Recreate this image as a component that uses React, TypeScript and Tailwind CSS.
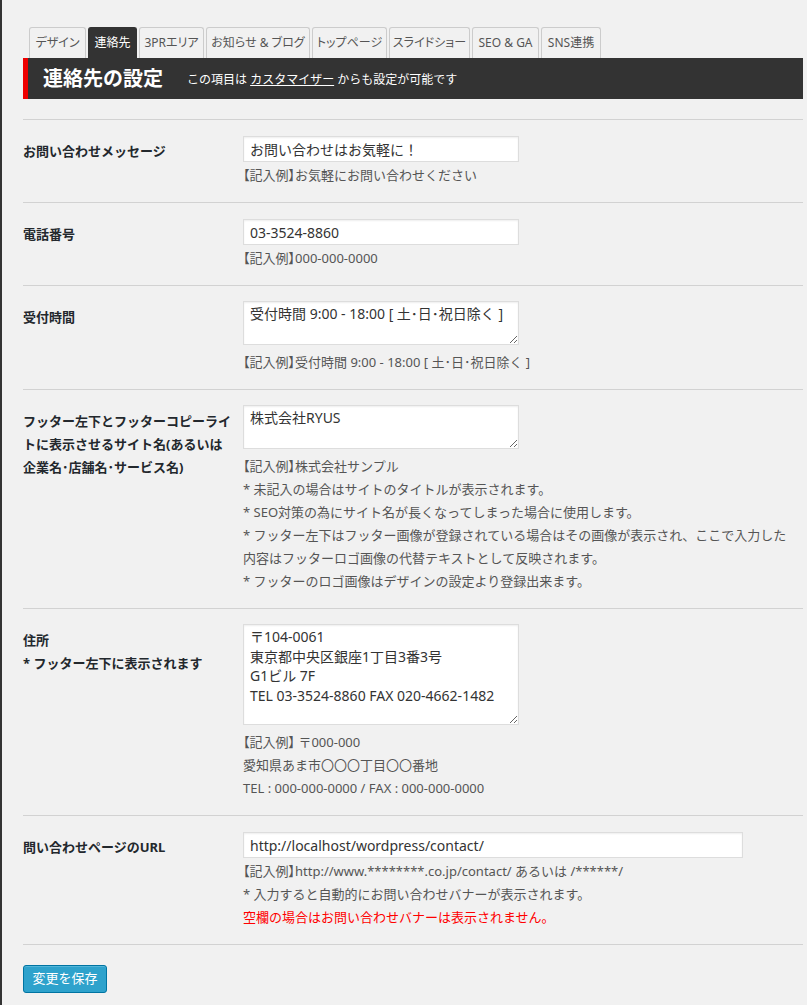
import React from 'react';

const tabs = [
  { label: 'デザイン', width: 'w-[57px]', active: false },
  { label: '連絡先', width: 'w-[49px]', active: true },
  { label: '3PRエリア', width: 'w-[65px]', active: false },
  { label: 'お知らせ & ブログ', width: 'w-[104px]', active: false },
  { label: 'トップページ', width: 'w-[75px]', active: false },
  { label: 'スライドショー', width: 'w-[81px]', active: false },
  { label: 'SEO & GA', width: 'w-[67px]', active: false },
  { label: 'SNS連携', width: 'w-[60px]', active: false },
];

const Row = ({ label, children }: { label: React.ReactNode; children: React.ReactNode }) => (
  <div className="flex border-t border-[#d2d2d2]">
    <div className="w-[220px] shrink-0 pt-[20px] pr-[10px] text-[13px] font-bold leading-[23px] text-[#23282d]">
      {label}
    </div>
    <div className="flex-1 py-[15px] pr-[10px]">{children}</div>
  </div>
);

const Help = ({ children, className = '' }: { children: React.ReactNode; className?: string }) => (
  <div className={`text-[13px] leading-[23px] text-[#555] ${className}`}>{children}</div>
);

// 【記入例】 — brackets are set narrow in the original
const Ex = () => <span className="[font-feature-settings:'palt']">【記入例】</span>;

const inputClass =
  'block mt-[1px] h-[26px] border border-[#ddd] bg-white px-[6px] text-[14px] text-[#333] shadow-[inset_0_1px_2px_rgba(0,0,0,0.07)] outline-none';
const textareaClass =
  'block w-[276px] border border-[#ddd] bg-white px-[6px] py-[2px] text-[14px] leading-[19.5px] text-[#333] shadow-[inset_0_1px_2px_rgba(0,0,0,0.07)] outline-none';

export default function App() {
  return (
    <div className="min-h-screen border-l-2 border-[#333] bg-[#f1f1f1] pl-[21px] pr-[4px] pt-[27px] font-['Noto_Sans','Noto_Sans_CJK_JP',sans-serif]">
      {/* tabs */}
      <div className="ml-[6px] flex gap-[2px]">
        {tabs.map((tab) => (
          <div
            key={tab.label}
            className={`${tab.width} flex h-[31px] items-center justify-center rounded-t-[3px] border border-b-0 text-[12px] whitespace-nowrap [font-feature-settings:'palt'] ${
              tab.active ? 'border-[#333] bg-[#333] text-white' : 'border-[#ccc] bg-[#f1f1f1] text-[#555]'
            }`}
          >
            {tab.label}
          </div>
        ))}
      </div>

      {/* header bar */}
      <div className="flex h-[41px] items-center border-l-[5px] border-[#e00] bg-[#333] pl-[15px] text-white">
        <h1 className="text-[20px] font-bold leading-none">連絡先の設定</h1>
        <span className="ml-[24px] pt-[3px] text-[12px]">
          この項目は <span className="underline">カスタマイザー</span> からも設定が可能です
        </span>
      </div>

      <div className="mt-[20px] border-b border-[#d2d2d2]">
        <Row label="お問い合わせメッセージ">
          <input className={`${inputClass} w-[276px]`} defaultValue="お問い合わせはお気軽に！" readOnly />
          <Help className="mt-[2px]">
            <Ex />お気軽にお問い合わせください
          </Help>
        </Row>

        <Row label="電話番号">
          <input className={`${inputClass} w-[276px]`} defaultValue="03-3524-8860" readOnly />
          <Help className="mt-[2px]">
            <Ex />000-000-0000
          </Help>
        </Row>

        <Row label="受付時間">
          <textarea className={`${textareaClass} h-[44px]`} defaultValue="受付時間 9:00 - 18:00 [ 土･日･祝日除く ]" readOnly />
          <Help className="mt-[6px]">
            <Ex />受付時間 9:00 - 18:00 [ 土･日･祝日除く ]
          </Help>
        </Row>

        <Row
          label={
            <>
              フッター左下とフッターコピーライ
              <br />
              トに表示させるサイト名(あるいは
              <br />
              企業名･店舗名･サービス名)
            </>
          }
        >
          <textarea className={`${textareaClass} h-[44px]`} defaultValue="株式会社RYUS" readOnly />
          <Help className="mt-[6px]">
            <Ex />株式会社サンプル
            <br />* 未記入の場合はサイトのタイトルが表示されます。
            <br />* SEO対策の為にサイト名が長くなってしまった場合に使用します。
            <br />* フッター左下はフッター画像が登録されている場合はその画像が表示され、ここで入力した内容はフッターロゴ画像の代替テキストとして反映されます。
            <br />* フッターのロゴ画像はデザインの設定より登録出来ます。
          </Help>
        </Row>

        <Row
          label={
            <>
              住所
              <br />* フッター左下に表示されます
            </>
          }
        >
          <textarea
            className={`${textareaClass} h-[101px]`}
            defaultValue={'〒104-0061\n東京都中央区銀座1丁目3番3号\nG1ビル 7F\nTEL 03-3524-8860 FAX 020-4662-1482'}
            readOnly
          />
          <Help className="mt-[6px]">
            <Ex /> 〒000-000
            <br />
            愛知県あま市〇〇〇丁目〇〇番地
            <br />
            TEL : 000-000-0000 / FAX : 000-000-0000
          </Help>
        </Row>

        <Row label="問い合わせページのURL">
          <input className={`${inputClass} w-[500px]`} defaultValue="http://localhost/wordpress/contact/" readOnly />
          <Help className="mt-[2px]">
            <Ex />http://www.********.co.jp/contact/ あるいは /******/
            <br />* 入力すると自動的にお問い合わせバナーが表示されます。
            <br />
            <span className="text-[#f00]">空欄の場合はお問い合わせバナーは表示されません。</span>
          </Help>
        </Row>
      </div>

      <button className="mt-[20px] h-[28px] w-[84px] rounded-[3px] border border-[#0074a2] bg-[#2ea2cc] text-[13px] text-white shadow-[inset_0_1px_0_rgba(120,200,230,0.5)]">
        変更を保存
      </button>
    </div>
  );
}
